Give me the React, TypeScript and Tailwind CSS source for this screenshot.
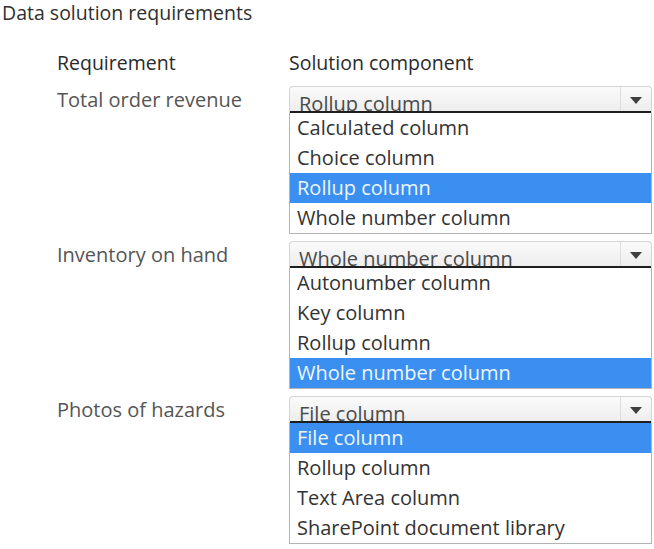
const groups = [
  {
    label: "Total order revenue",
    value: "Rollup column",
    options: ["Calculated column", "Choice column", "Rollup column", "Whole number column"],
  },
  {
    label: "Inventory on hand",
    value: "Whole number column",
    options: ["Autonumber column", "Key column", "Rollup column", "Whole number column"],
  },
  {
    label: "Photos of hazards",
    value: "File column",
    options: ["File column", "Rollup column", "Text Area column", "SharePoint document library"],
  },
];

function Dropdown({ value, options }: { value: string; options: string[] }) {
  return (
    <div className="w-[363px]">
      <div className="relative flex h-[27px] overflow-hidden rounded-t-[4px] border border-b-0 border-[#d4d4d4] bg-gradient-to-b from-[#fbfbfb] to-[#ececec]">
        <span className="flex-1 truncate pl-[9px] pt-[4px] text-[20px] leading-[25px] text-[#4a4a4a]">
          {value}
        </span>
        <span className="flex w-[31px] items-center justify-center border-l border-[#dcdcdc]">
          <svg width="12" height="7" viewBox="0 0 12 7">
            <path d="M0 0h12L6 7z" fill="#3f3f3f" />
          </svg>
        </span>
        <span className="absolute bottom-0 left-0 right-0 h-[2px] bg-[#1e1e1e]" />
      </div>
      <ul className="border border-t-0 border-[#b4b4b4] bg-white">
        {options.map((o) => (
          <li
            key={o}
            className={`h-[30px] pl-[7px] text-[20px] leading-[30px] ${
              o === value ? "bg-[#3a8ff0] text-[#eef6ff]" : "text-[#333]"
            }`}
          >
            {o}
          </li>
        ))}
      </ul>
    </div>
  );
}

export default function App() {
  return (
    <div className="h-[549px] w-[654px] bg-white font-['Open_Sans',sans-serif]">
      <h1 className="pl-[2px] pt-[0px] text-[19.5px] leading-[26px] text-[#2f2f2f]">
        Data solution requirements
      </h1>
      <div className="pl-[57px]">
        <div className="mt-[24px] flex text-[19.5px] leading-[26px] font-medium text-[#2a2a2a]">
          <span className="w-[232px]">Requirement</span>
          <span>Solution component</span>
        </div>
        <div className="mt-[10px] flex flex-col gap-[7px]">
          {groups.map((g) => (
            <div key={g.label} className="flex">
              <span className="w-[232px] pt-[1px] text-[20px] leading-[26px] text-[#555]">{g.label}</span>
              <Dropdown value={g.value} options={g.options} />
            </div>
          ))}
        </div>
      </div>
    </div>
  );
}
